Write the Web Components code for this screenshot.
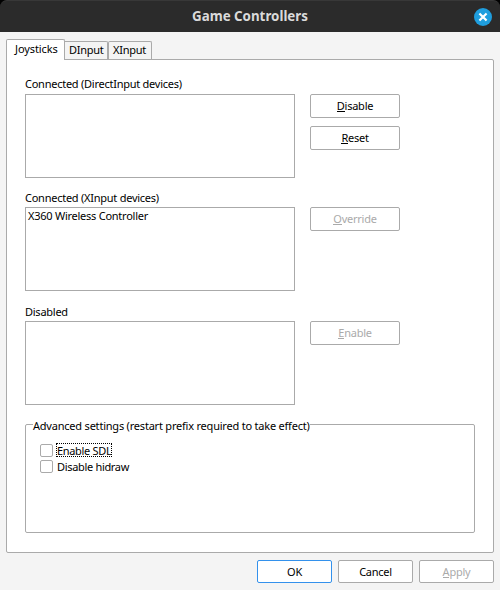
<!DOCTYPE html>
<html lang="en">
<head>
<meta charset="utf-8">
<title>Game Controllers</title>
<style>
html, body { margin: 0; background: #000; }
body { font: 11px/14px "Noto Sans", "Open Sans", sans-serif; letter-spacing: -0.25px; color: #000; --line: #aaa; }
</style>
</head>
<body>
<game-controllers></game-controllers>
<script>
function define(name, html) {
  const t = document.createElement('template');
  t.innerHTML = html;
  customElements.define(name, class extends HTMLElement {
    constructor() {
      super();
      this.attachShadow({ mode: 'open' }).appendChild(t.content.cloneNode(true));
    }
  });
}

define('title-bar', `<style>
:host { display: grid; grid-template-columns: 32px 1fr 32px; align-items: center; height: 32px; box-sizing: border-box;
  background: #2b2b2b; border-top: 1px solid #383838; border-radius: 7px 7px 0 0; color: #dadada; }
.t { grid-column: 2; text-align: center; font-weight: 700; font-size: 13.33px; line-height: 18px; letter-spacing: 0; padding-bottom: 2px; }
svg { display: block; margin-left: 5px; }
</style><div class="t"><slot></slot></div>
<svg width="20" height="20" viewBox="0 0 20 20"><circle cx="10" cy="10" r="9" fill="#1f9ede"/><path d="M7.2 7.2l5.6 5.6M12.8 7.2l-5.6 5.6" stroke="#fff" stroke-width="2.2" stroke-linecap="square"/></svg>`);

define('ui-tab', `<style>
:host { display: block; box-sizing: border-box; width: 44px; height: 18px; padding: 1px 0 0 4px; white-space: nowrap;
  border: 1px solid var(--line); border-bottom: 0; border-radius: 2px 2px 0 0; background: #f4f4f4; }
:host([joined]) { width: 43px; border-left: 0; border-radius: 0 2px 0 0; }
:host([active]) { width: 59px; height: 21px; margin-bottom: -1px; padding: 2px 0 0 8px; letter-spacing: -0.1px;
  background: #fff; position: relative; }
</style><slot></slot>`);

define('ui-button', `<style>
:host { display: flex; align-items: center; justify-content: center; box-sizing: border-box; width: 90px; height: 24px;
  border: 1px solid var(--line); border-radius: 2px; background: #fff; }
:host([dialog]) { width: 75px; height: 23px; }
:host([default]) { border-color: #3391ec; }
:host([disabled]) { color: #aaa; }
::slotted(u) { text-decoration: none; box-shadow: 0 1px 0 currentColor; display: inline-block; height: 12px; line-height: 14px; }
</style><span><slot></slot></span>`);

define('list-box', `<style>
:host { display: block; box-sizing: border-box; height: 84px; border: 1px solid var(--line); padding: 1px 2px; background: #fff; }
</style><slot></slot>`);

define('device-section', `<style>
:host { display: grid; grid-template: var(--label, 16px) 84px / 270px 90px; column-gap: 15px; }
.b { grid-area: 2 / 2; display: flex; flex-direction: column; gap: 8px; }
list-box { grid-area: 2 / 1; }
</style><slot name="label"></slot><list-box><slot></slot></list-box><div class="b"><slot name="actions"></slot></div>`);

define('check-box', `<style>
:host { display: flex; align-items: center; height: 16px; letter-spacing: -0.32px; }
i { box-sizing: border-box; width: 13px; height: 13px; border: 1px solid var(--line); border-radius: 2px; margin-right: 3px; }
span { box-sizing: border-box; height: 14px; line-height: 13px; border: 1px solid transparent; }
:host([focused]) span { border: 1px dotted #000; }
</style><i></i><span><slot></slot></span>`);

define('group-box', `<style>
:host { display: block; box-sizing: border-box; height: 109px; border: 1px solid var(--line); border-radius: 2px; padding: 0 7px; }
.l { display: block; width: max-content; height: 14px; margin-top: -6px; background: #fff; letter-spacing: -0.21px; }
.c { padding: 9px 0 0 7px; }
</style><span class="l"><slot name="legend"></slot></span><div class="c"><slot></slot></div>`);

define('game-controllers', `<style>
:host { display: flex; flex-direction: column; width: 500px; height: 590px; }
main { flex: 1; box-sizing: border-box; background: #f4f4f4; padding: 7px 6px; }
nav { display: flex; align-items: flex-end; height: 20px; }
.panel { box-sizing: border-box; height: 494px; background: #fff; border: 1px solid var(--line); border-radius: 0 2px 2px 2px; padding: 17px 18px 0; }
device-section:first-child { --label: 17px; }
device-section + device-section { margin-top: 13px; }
device-section:nth-child(3) { margin-top: 14px; }
group-box { margin-top: 19px; }
footer { display: flex; justify-content: flex-end; gap: 6px; padding-top: 7px; }
</style>
<title-bar>Game Controllers</title-bar>
<main>
<nav><ui-tab active>Joysticks</ui-tab><ui-tab joined>DInput</ui-tab><ui-tab>XInput</ui-tab></nav>
<div class="panel">
<device-section><span slot="label">Connected (DirectInput devices)</span>
<ui-button slot="actions"><u>D</u>isable</ui-button><ui-button slot="actions"><u>R</u>eset</ui-button></device-section>
<device-section><span slot="label">Connected (XInput devices)</span>X360 Wireless Controller
<ui-button slot="actions" disabled><u>O</u>verride</ui-button></device-section>
<device-section><span slot="label">Disabled</span>
<ui-button slot="actions" disabled><u>E</u>nable</ui-button></device-section>
<group-box><span slot="legend">Advanced settings (restart prefix required to take effect)</span>
<check-box focused>Enable SDL</check-box><check-box>Disable hidraw</check-box></group-box>
</div>
<footer><ui-button dialog default>OK</ui-button><ui-button dialog>Cancel</ui-button><ui-button dialog disabled><u>A</u>pply</ui-button></footer>
</main>`);
</script>
</body>
</html>
